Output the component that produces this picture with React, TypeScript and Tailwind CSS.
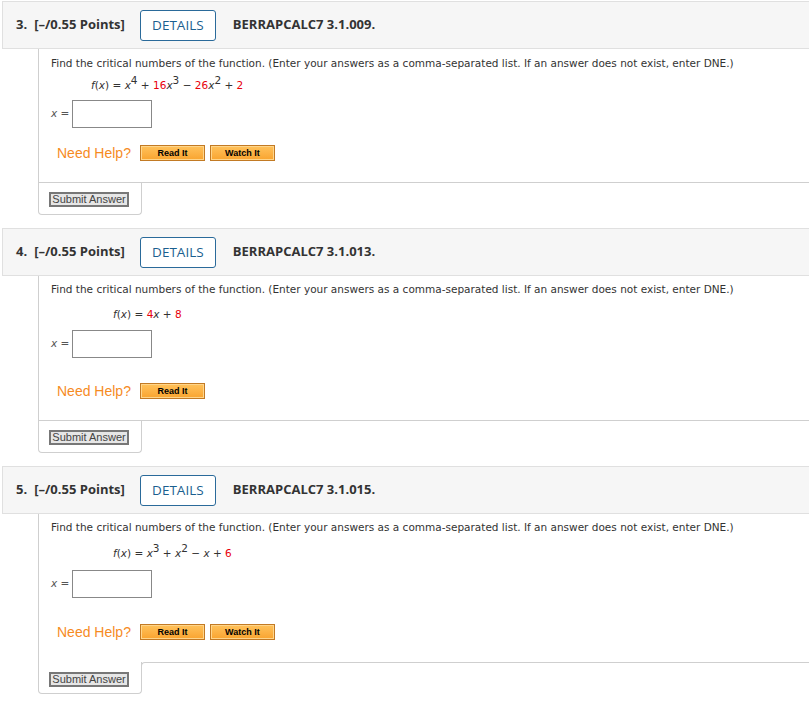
import React from "react";

type Term = { t: string; red?: boolean; it?: boolean; sup?: string };

type Question = {
  num: number;
  code: string;
  terms: Term[];
  watch: boolean;
  mathIndent: string;
  pads: {
    top: string;
    math: string;
    input: string;
    help: string;
    divider: string;
  };
  splitSubmit?: boolean;
};

const questions: Question[] = [
  {
    num: 3,
    code: "BERRAPCALC7 3.1.009.",
    terms: [
      { t: " = " },
      { t: "x", it: true, sup: "4" },
      { t: " + " },
      { t: "16", red: true },
      { t: "x", it: true, sup: "3" },
      { t: " − " },
      { t: "26", red: true },
      { t: "x", it: true, sup: "2" },
      { t: " + " },
      { t: "2", red: true },
    ],
    watch: true,
    mathIndent: "ml-[40px]",
    pads: { top: "pt-[7px]", math: "mt-[6px] h-[16px]", input: "mt-[8px]", help: "mt-[17px]", divider: "pb-[21px]" },
  },
  {
    num: 4,
    code: "BERRAPCALC7 3.1.013.",
    terms: [
      { t: " = " },
      { t: "4", red: true },
      { t: "x", it: true },
      { t: " + " },
      { t: "8", red: true },
    ],
    watch: false,
    mathIndent: "ml-[62px]",
    pads: { top: "pt-[6px]", math: "mt-[11px] h-[14px]", input: "mt-[9px]", help: "mt-[25px]", divider: "pb-[21px]" },
  },
  {
    num: 5,
    code: "BERRAPCALC7 3.1.015.",
    terms: [
      { t: " = " },
      { t: "x", it: true, sup: "3" },
      { t: " + " },
      { t: "x", it: true, sup: "2" },
      { t: " − " },
      { t: "x", it: true },
      { t: " + " },
      { t: "6", red: true },
    ],
    watch: true,
    mathIndent: "ml-[62px]",
    pads: { top: "pt-[6px]", math: "mt-[10px] h-[16px]", input: "mt-[10px]", help: "mt-[26px]", divider: "pb-[22px]" },
    splitSubmit: true,
  },
];

const helpBtn =
  "h-[16px] w-[65px] border border-[#c27a24] bg-gradient-to-b from-[#ffc25a] to-[#f9a42e] text-[9px] font-bold text-black leading-none shadow-[inset_0_0_0_1px_#ffd58a] [font-family:'Liberation_Sans',Arial,sans-serif]";

const SubmitBtn = () => (
  <button className="block h-[15px] w-[80px] border-2 border-[#777] bg-[#e6e6e6] text-[11px] leading-none text-[#444] [font-family:'Liberation_Sans',Arial,sans-serif]">
    Submit Answer
  </button>
);

const QuestionBlock = ({ q }: { q: Question }) => {
  return (
    <div className="mb-[13px]">
      {/* header bar */}
      <div className="flex h-[48px] items-center border-y border-l border-[#e0e0e0] bg-[#f6f6f6] pl-[13px] text-[13px] text-[#333] [font-family:'Open_Sans',sans-serif]">
        <span className="font-bold">{q.num}.</span>
        <span className="ml-[7px] font-bold">[–/0.55 Points]</span>
        <span className="ml-[15px] flex h-[31px] w-[76px] items-center justify-center rounded-[3px] border border-[#2a6a9a] bg-white text-[13.5px] text-[#1b5f8f]">
          DETAILS
        </span>
        <span className="ml-[17px] font-bold">{q.code}</span>
      </div>

      <div className="ml-[36px] [font-family:'DejaVu_Sans',Verdana,sans-serif]">
        <div
          className={`border-l border-[#cfcfcf] pl-[12px] ${q.pads.top} ${q.pads.divider} ${
            q.splitSubmit ? "" : "border-b"
          }`}
        >
          <p className="h-[14px] whitespace-nowrap text-[10.5px] leading-[14px] text-[#333]">
            Find the critical numbers of the function. (Enter your answers as a comma-separated list. If an answer does not exist, enter DNE.)
          </p>
          <div className={`${q.mathIndent} ${q.pads.math} flex items-end text-[10.5px] leading-[14px] text-[#333]`}>
            <span className="whitespace-pre">
              <i>f</i>(<i>x</i>)
              {q.terms.map((term, i) => (
                <span key={i} className={term.red ? "text-[#e8000b]" : ""}>
                  {term.it ? <i>{term.t}</i> : term.t}
                  {term.sup && <sup className="relative -top-[5px] text-[10.5px]">{term.sup}</sup>}
                </span>
              ))}
            </span>
          </div>
          <div className={`${q.pads.input} flex items-center`}>
            <span className="text-[10.5px] text-[#555]">
              <i>x</i> =
            </span>
            <div className="ml-[3px] h-[28px] w-[80px] border border-[#888] bg-white" />
          </div>
          <div className={`${q.pads.help} flex items-center`}>
            <span className="ml-[6px] text-[14px] leading-none text-[#f68b1f] [font-family:'Liberation_Sans',Arial,sans-serif]">
              Need Help?
            </span>
            <button className={`ml-[9px] ${helpBtn}`}>Read It</button>
            {q.watch && <button className={`ml-[5px] ${helpBtn}`}>Watch It</button>}
          </div>
        </div>
        {q.splitSubmit ? (
          <div className="flex">
            <div className="h-[32px] w-[104px] rounded-b-[4px] border-x border-b border-[#cfcfcf] pl-[10px] pt-[10px]">
              <SubmitBtn />
            </div>
            <div className="-ml-[1px] h-[4px] flex-1 rounded-tl-[4px] border-l border-t border-[#cfcfcf]" />
          </div>
        ) : (
          <div className="h-[32px] w-[104px] rounded-b-[4px] border-x border-b border-[#cfcfcf] pl-[10px] pt-[9px]">
            <SubmitBtn />
          </div>
        )}
      </div>
    </div>
  );
};

export default function App() {
  return (
    <div className="min-h-[708px] w-[809px] overflow-hidden bg-white pt-[1px] pl-[2px]">
      <div className="w-[830px]">
        {questions.map((q) => (
          <QuestionBlock key={q.num} q={q} />
        ))}
      </div>
    </div>
  );
}
